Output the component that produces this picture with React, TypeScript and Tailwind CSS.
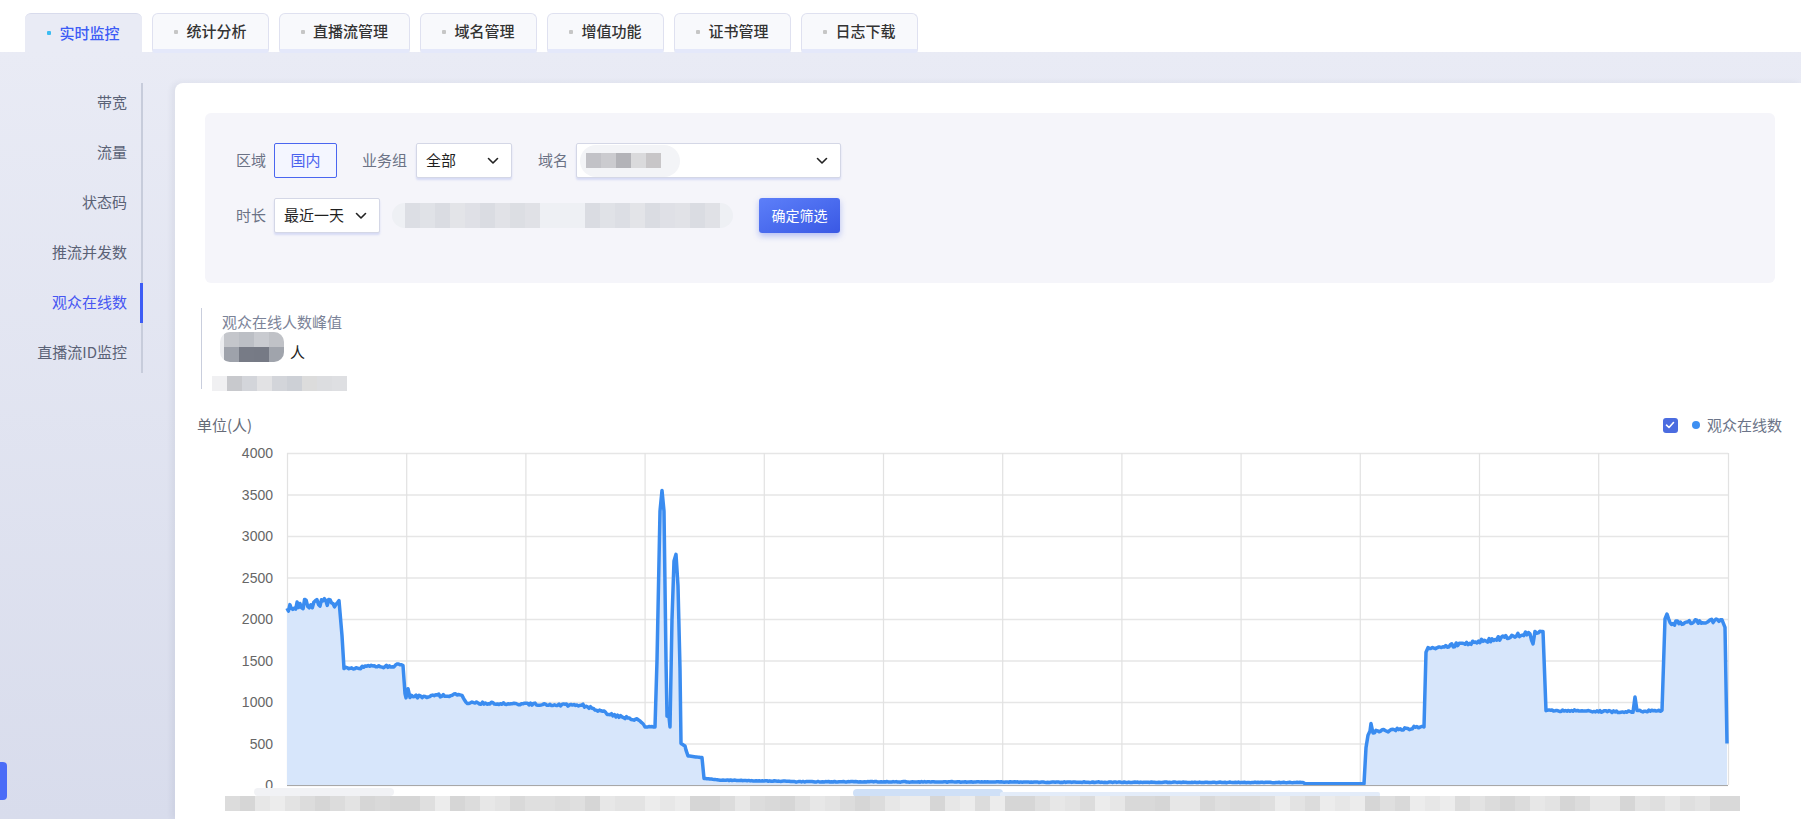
import React from 'react';

const FONT = { fontFamily: '"Noto Sans CJK SC", "Noto Sans", sans-serif' };

const tabs = [
  { name: '实时监控', w: 'w-[117px]', active: true },
  { name: '统计分析', w: 'w-[117px]' },
  { name: '直播流管理', w: 'w-[131px]' },
  { name: '域名管理', w: 'w-[117px]' },
  { name: '增值功能', w: 'w-[117px]' },
  { name: '证书管理', w: 'w-[117px]' },
  { name: '日志下载', w: 'w-[117px]' },
];

const menu = ['带宽', '流量', '状态码', '推流并发数', '观众在线数', '直播流ID监控'];

// deterministic noise
function rnd(n: number) {
  const s = Math.sin(n * 12.9898 + 78.233) * 43758.5453;
  return s - Math.floor(s);
}

// [x (page px), value, noise amplitude]
const anchors: [number, number, number][] = [
  [287, 2120, 55], [300, 2180, 60], [320, 2200, 60], [336, 2200, 30], [339, 2220, 0],
  [342, 1800, 0], [344, 1410, 20], [400, 1440, 20], [403, 1440, 0], [405, 1100, 0],
  [406, 1050, 0], [408, 1160, 0], [410, 1060, 20], [460, 1090, 16], [462, 1080, 0],
  [466, 990, 14], [583, 960, 16], [613, 840, 14], [640, 780, 10], [645, 700, 8],
  [655, 700, 0], [657, 1500, 0], [660, 3300, 0], [662, 3550, 0], [664, 3300, 0],
  [666, 1500, 0], [667, 830, 0], [669, 820, 0], [670, 700, 0], [672, 2000, 0],
  [674, 2700, 0], [676, 2780, 0], [678, 2400, 0], [680, 1400, 0], [681, 500, 0],
  [685, 470, 0], [686, 420, 0], [688, 350, 0], [702, 330, 0], [704, 80, 0],
  [720, 60, 4], [800, 40, 4], [1303, 30, 3], [1305, 15, 0], [1364, 15, 0],
  [1366, 450, 0], [1368, 600, 0], [1370, 650, 0], [1371, 740, 0], [1373, 640, 18],
  [1423, 700, 18], [1424, 700, 0], [1426, 1600, 0], [1428, 1640, 24], [1480, 1730, 28],
  [1530, 1830, 28], [1533, 1700, 0], [1535, 1840, 18], [1543, 1850, 0], [1546, 900, 12],
  [1633, 880, 12], [1635, 1060, 0], [1637, 890, 12], [1662, 900, 0], [1665, 2000, 0],
  [1667, 2060, 0], [1670, 1950, 28], [1722, 1990, 0], [1725, 1900, 0], [1727, 500, 0],
];

function buildData() {
  const out: [number, number][] = [];
  for (let i = 0; i < anchors.length - 1; i++) {
    const [x0, v0, a] = anchors[i];
    const [x1, v1] = anchors[i + 1];
    const span = x1 - x0;
    const steps = Math.max(1, Math.round(span / 1.5));
    for (let s = 0; s < steps; s++) {
      const x = x0 + (span * s) / steps;
      const t = s / steps;
      const n = a ? (rnd(x) - 0.5) * 2 * a : 0;
      out.push([x, v0 + (v1 - v0) * t + n]);
    }
  }
  const last = anchors[anchors.length - 1];
  out.push([last[0], last[1]]);
  return out;
}

const mosaicGrays = ['#d6d6d6', '#dcdcdc', '#e3e3e3', '#e7e7e7', '#ececec', '#dfdfdf', '#d9d9d9'];

function Chart() {
  const OX = 197;
  const L = 90;
  const R = 1531;
  const T = 13;
  const B = 345;
  const yOf = (v: number) => B - (v * (B - T)) / 4000;
  const pts = buildData();
  const line = pts
    .map(([x, v], i) => `${i ? 'L' : 'M'}${(x - OX).toFixed(1)} ${yOf(v).toFixed(1)}`)
    .join('');
  const area = `${line}L${1727 - OX} ${B}L${L} ${B}Z`;
  const vx = Array.from({ length: 12 }, (_, i) => 287 + i * 119.2 - OX);
  const levels = [0, 500, 1000, 1500, 2000, 2500, 3000, 3500, 4000];
  const blocks = Array.from({ length: 101 }, (_, i) => ({
    x: 225 - OX + i * 15,
    c: mosaicGrays[Math.floor(rnd(i * 3.7) * mosaicGrays.length)],
  }));

  return (
    <svg width={1578} height={379} className="block overflow-visible" style={{ fontFamily: '"Liberation Sans", Arial, sans-serif' }}>
      {levels.map((lv) => (
        <line key={lv} x1={L} x2={R} y1={yOf(lv) + 0.5} y2={yOf(lv) + 0.5} stroke="#e6e6e6" strokeWidth={1.5} />
      ))}
      {vx.map((x) => (
        <line key={x} x1={x + 0.5} x2={x + 0.5} y1={T} y2={B} stroke="#e2e2e2" strokeWidth={1.2} />
      ))}
      <line x1={R + 0.5} x2={R + 0.5} y1={T} y2={B} stroke="#e2e2e2" strokeWidth={1.2} />
      <path d={area} fill="#d7e6fb" />
      <path d={line} fill="none" stroke="#3a8cf0" strokeWidth={3.5} strokeLinejoin="round" />
      <line x1={L} x2={R} y1={B + 0.5} y2={B + 0.5} stroke="#a8a8a8" strokeWidth={1} />
      {levels.map((lv) => (
        <text key={lv} x={76} y={yOf(lv)} textAnchor="end" dominantBaseline="central" fontSize={14} fill="#666">
          {lv}
        </text>
      ))}
      {/* blurred x-axis labels / zoom slider */}
      <rect x={254 - OX} y={348} width={140} height={8} rx={4} fill="#f1f2f5" />
      <rect x={853 - OX} y={349} width={150} height={8} rx={4} fill="#cfe0f7" />
      <rect x={1000 - OX} y={352} width={380} height={5} rx={2} fill="#e3ecf9" />
      {blocks.map((b, i) => (
        <rect key={i} x={b.x} y={356} width={15} height={15} fill={b.c} />
      ))}
    </svg>
  );
}

function Chevron() {
  return (
    <svg width="12" height="8" viewBox="0 0 12 8" className="shrink-0">
      <path d="M1.5 1.5 6 6l4.5-4.5" fill="none" stroke="#222" strokeWidth="1.6" strokeLinecap="round" strokeLinejoin="round" />
    </svg>
  );
}

function Select({ w, label }: { w: string; label: string }) {
  return (
    <div className={`${w} h-[35px] bg-white border border-[#d4d7e6] rounded-[2px] shadow-[0_2px_2px_rgba(80,100,220,0.18)] flex items-center justify-between pl-[9px] pr-[12px]`}>
      <span className="text-[15px] text-[#1f1f1f]">{label}</span>
      <Chevron />
    </div>
  );
}

function Mosaic({ colors, w = 15, h = 15 }: { colors: string[]; w?: number; h?: number }) {
  return (
    <div className="flex">
      {colors.map((c, i) => (
        <div key={i} style={{ width: w, height: h, background: c }} />
      ))}
    </div>
  );
}

export default function App() {
  return (
    <div className="w-[1801px] h-[819px] overflow-hidden bg-white relative" style={FONT}>
      {/* top tabs */}
      <div className="h-[52px] flex items-end pl-[25px] gap-[10px]">
        {tabs.map((t) =>
          t.active ? (
            <div
              key={t.name}
              className={`${t.w} h-[39px] rounded-t-[6px] bg-[#e9ebf5] border-t border-[#d8dbec] flex items-center justify-center gap-[8px]`}
            >
              <span className="w-[4px] h-[4px] rounded-[1px] bg-[#3bbcf2]" />
              <span className="text-[15px] font-medium text-[#3d5cf5]">{t.name}</span>
            </div>
          ) : (
            <div
              key={t.name}
              className={`${t.w} h-[40px] mb-[-1px] rounded-t-[6px] rounded-b-[3px] bg-[#f8f9fc] border border-[#dfe1f0] border-b-[4px] border-b-[#e4e8fa] flex items-center justify-center gap-[8px]`}
            >
              <span className="w-[4px] h-[4px] rounded-[1px] bg-[#c6c6c6]" />
              <span className="text-[15px] font-medium text-[#333]">{t.name}</span>
            </div>
          ),
        )}
      </div>

      {/* body */}
      <div className="h-[767px] flex bg-linear-to-b from-[#e9ebf5] to-[#d8dcec]">
        {/* side menu */}
        <div className="w-[175px] shrink-0 pt-[31px]">
          <div className="w-[143px] h-[290px] border-r-2 border-[#c7ccdb]">
            {menu.map((m) => {
              const active = m === '观众在线数';
              return (
                <div key={m} className="relative h-[50px] pt-[6px] pr-[14px] text-right">
                  <span className={`text-[15px] leading-[22px] ${active ? 'text-[#4656f2]' : 'text-[#5a6276]'}`}>{m}</span>
                  {active && <span className="absolute right-[-2px] top-0 w-[3px] h-[40px] bg-[#3d5cf5]" />}
                </div>
              );
            })}
          </div>
        </div>

        {/* main card */}
        <div className="flex-1 mt-[31px] bg-white rounded-tl-[8px] shadow-[-3px_0_6px_rgba(40,50,90,0.07)] pt-[30px] pl-[22px] pr-[26px]">
          {/* filter panel */}
          <div className="ml-[8px] h-[170px] rounded-[6px] bg-[#f5f5fa] pt-[30px] pl-[31px]">
            <div className="flex items-center h-[35px]">
              <span className="text-[15px] text-[#6b7285] mr-[8px]">区域</span>
              <div className="w-[63px] h-[35px] rounded-[2px] border border-[#4a66f0] bg-[#f4f6ff] flex items-center justify-center text-[15px] text-[#4a62ee]">
                国内
              </div>
              <span className="text-[15px] text-[#6b7285] ml-[25px] mr-[9px]">业务组</span>
              <Select w="w-[96px]" label="全部" />
              <span className="text-[15px] text-[#6b7285] ml-[26px] mr-[8px]">域名</span>
              <div className="w-[265px] h-[35px] bg-white border border-[#d4d7e6] rounded-[2px] shadow-[0_2px_2px_rgba(80,100,220,0.18)] flex items-center justify-between pl-[3px] pr-[12px]">
                <div className="w-[100px] h-[32px] flex items-center pl-[6px] rounded-full bg-[#f3f4f7]">
                  <Mosaic colors={['#c2c2c7', '#cbcbcf', '#b3b3b8', '#dadadc', '#c8c6c8']} />
                </div>
                <Chevron />
              </div>
            </div>
            <div className="flex items-center h-[35px] mt-[20px]">
              <span className="text-[15px] text-[#6b7285] mr-[8px]">时长</span>
              <Select w="w-[106px]" label="最近一天" />
              <div className="ml-[12px] flex items-center h-[25px] rounded-full bg-[#eef0f4] pl-[13px] pr-[13px]">
                <Mosaic
                  w={15}
                  h={25}
                  colors={['#dcdee4', '#e0e2e7', '#dadce2', '#e3e4e8', '#dfe0e6', '#dadce2', '#e1e2e7', '#dcdee3', '#e0e1e6']}
                />
                <div className="w-[45px]" />
                <Mosaic
                  w={15}
                  h={25}
                  colors={['#dadce2', '#e0e2e7', '#dcdee4', '#e3e4e8', '#dadce2', '#dfe0e6', '#e1e2e7', '#dadce2', '#e0e1e6']}
                />
              </div>
              <button className="ml-[26px] w-[81px] h-[35px] rounded-[3px] bg-linear-to-br from-[#5d7ff9] to-[#3a58e4] text-white text-[14px] shadow-[0_3px_6px_rgba(60,90,230,0.35)]">
                确定筛选
              </button>
            </div>
          </div>

          {/* peak stats */}
          <div className="ml-[4px] mt-[25px] h-[81px] border-l border-[#c9cedd]">
            <div className="pl-[20px] pt-[3px] text-[15px] leading-[22px] text-[#7b8398]">观众在线人数峰值</div>
            <div className="flex items-end mt-[-1px] pl-[18px] h-[30px]">
              <div className="rounded-[10px] overflow-hidden bg-[#ecedf0] pl-[4px]">
                <Mosaic colors={['#c4c6cb', '#bcbfc5', '#c9cbd0', '#c0c2c7']} />
                <Mosaic colors={['#9ea2ab', '#777b86', '#767a85', '#a0a4ac']} />
              </div>
              <span className="ml-[6px] text-[15px] leading-[20px] text-[#222]">人</span>
            </div>
            <div className="mt-[14px] pl-[10px]">
              <Mosaic
                colors={['#f0f0f2', '#c8c9cd', '#d3d5da', '#e2e2e4', '#d3d5da', '#cdd0d6', '#dcdcdc', '#dcdde0', '#dedfe2']}
              />
            </div>
          </div>

          {/* chart header */}
          <div className="mt-[25px] h-[22px] flex items-center justify-between mr-[-7px]">
            <span className="text-[15px] text-[#666b78]">单位(人)</span>
            <div className="flex items-center">
              <span className="w-[15px] h-[15px] rounded-[3px] bg-[#4b6ce0] flex items-center justify-center">
                <svg width="10" height="8" viewBox="0 0 10 8">
                  <path d="M1.5 4.2 4 6.5l4.5-5" fill="none" stroke="#fff" strokeWidth="1.6" strokeLinecap="round" strokeLinejoin="round" />
                </svg>
              </span>
              <span className="ml-[14px] w-[8px] h-[8px] rounded-full bg-[#3d8ff2]" />
              <span className="ml-[7px] text-[15px] text-[#6b7488]">观众在线数</span>
            </div>
          </div>

          <div className="mt-[4px]">
            <Chart />
          </div>
        </div>
      </div>

      {/* floating side handle */}
      <div className="absolute left-0 top-[762px] w-[7px] h-[38px] rounded-r-[4px] bg-[#4a6cf7]" />
    </div>
  );
}
